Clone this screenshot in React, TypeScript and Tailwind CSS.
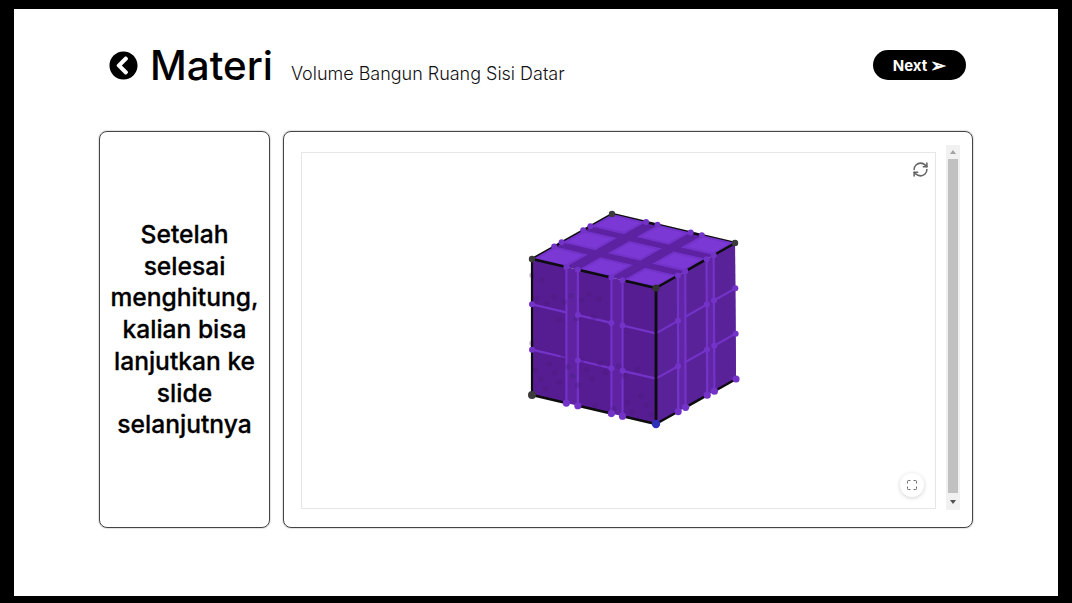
import { FaChevronCircleLeft } from "react-icons/fa";
import { Maximize, RefreshCw } from "lucide-react";

type P = [number, number];
const A: P = [32, 64], B: P = [156, 93], C: P = [156, 229], D: P = [32, 200], E: P = [235, 48], F: P = [236, 184], G: P = [112, 19];
const fr = [0, 0.277, 0.37, 0.64, 0.73, 1];
const lerp = (a: P, b: P, t: number): P => [a[0] + (b[0] - a[0]) * t, a[1] + (b[1] - a[1]) * t];
const bil = (a: P, b: P, c: P, d: P, u: number, v: number): P => lerp(lerp(a, b, u), lerp(d, c, u), v);
const L = (u: number, v: number) => bil(A, B, C, D, u, v);
const R = (u: number, v: number) => bil(B, E, F, C, u, v);
const T = (u: number, v: number) => bil(A, B, E, G, u, v);
const pts = (p: P[]) => p.map((q) => q.join(",")).join(" ");
const seg = (a: P, b: P) => ({ x1: a[0], y1: a[1], x2: b[0], y2: b[1] });
const V = "#7332c8";
const spans: [number, number][] = [[0, 1], [2, 3], [4, 5]];

function Face({ f, fill, gap }: { f: (u: number, v: number) => P; fill: string; gap: string }) {
  return (
    <g>
      <polygon points={pts([f(0, 0), f(1, 0), f(1, 1), f(0, 1)])} fill={gap} />
      {spans.map(([a, b]) => (
        <polygon key={a} points={pts([f(fr[a], 0), f(fr[b], 0), f(fr[b], 1), f(fr[a], 1)])} fill={fill} />
      ))}
      {[1, 2, 3, 4].map((i) => (
        <line key={i} {...seg(f(fr[i], 0.02), f(fr[i], 1))} stroke={V} strokeWidth={2.2} />
      ))}
      {[1 / 3, 2 / 3].flatMap((v) =>
        spans.map(([a, b]) => (
          <line key={`${v}-${a}`} {...seg(f(fr[a], v), f(fr[b], v))} stroke={V} strokeWidth={2.2} />
        ))
      )}
    </g>
  );
}

function Cube() {
  const shadowDots: P[] = [];
  for (let i = 0; i < 26; i++) {
    shadowDots.push(L(((i * 37) % 100) / 100, 0.62 + (((i * 23) % 38) / 100)));
    if (i % 2 === 0) shadowDots.push(L(((i * 53) % 60) / 100, 0.12 + (((i * 17) % 30) / 100)));
  }
  const edge = "#0a0a0a";
  return (
    <svg width="260" height="240" viewBox="0 0 260 240" className="block">
      <defs>
        <filter id="soft" x="-5%" y="-5%" width="110%" height="110%">
          <feGaussianBlur stdDeviation="0.5" />
        </filter>
      </defs>
      <g filter="url(#soft)">
        <polygon points={pts([A, B, E, G])} fill="#5c22a2" />
        <line {...seg(A, G)} stroke={edge} strokeWidth={2.4} />
        <line {...seg(G, E)} stroke={edge} strokeWidth={2.4} />
        <Face f={L} fill="#571e92" gap="#5e24a0" />
        <Face f={R} fill="#5a2299" gap="#6128a6" />
        {shadowDots.map((p, i) => (
          <circle key={i} cx={p[0]} cy={p[1]} r={2.8} fill="#3f1270" opacity={0.25} />
        ))}
        {spans.flatMap(([a, b]) =>
          spans.map(([c, d]) => (
            <polygon
              key={`${a}-${c}`}
              points={pts([T(fr[a] + 0.015, fr[c] + 0.015), T(fr[b] - 0.015, fr[c] + 0.015), T(fr[b] - 0.015, fr[d] - 0.015), T(fr[a] + 0.015, fr[d] - 0.015)])}
              fill="#7b37d4"
              stroke={V}
              strokeWidth={2}
            />
          ))
        )}
        {spans.map(([a, b]) => (
          <line key={a} {...seg(lerp(A, B, fr[a] + 0.01), lerp(A, B, fr[b] - 0.01))} stroke={edge} strokeWidth={2.4} />
        ))}
        {spans.map(([a, b]) => (
          <line key={a} {...seg(lerp(B, E, fr[a] + 0.01), lerp(B, E, fr[b] - 0.01))} stroke={edge} strokeWidth={2.4} />
        ))}
        {spans.map(([a, b]) => (
          <line key={a} {...seg(lerp(C, F, fr[a] + 0.01), lerp(C, F, fr[b] - 0.01))} stroke={edge} strokeWidth={2.4} />
        ))}
        {spans.map(([a, b]) => (
          <line key={a} {...seg(lerp(D, C, fr[a] + 0.01), lerp(D, C, fr[b] - 0.01))} stroke={edge} strokeWidth={2.4} />
        ))}
        <line {...seg(A, D)} stroke={edge} strokeWidth={2.2} />
        <line {...seg(B, C)} stroke={edge} strokeWidth={2.8} />
        {[1, 2, 3, 4].flatMap((i) => [lerp(D, C, fr[i]), lerp(C, F, fr[i]), lerp(A, G, fr[i]), lerp(G, E, fr[i]), lerp(A, B, fr[i]), lerp(B, E, fr[i])]).map((p, i) => (
          <circle key={i} cx={p[0]} cy={p[1]} r={i % 6 < 2 ? 3.6 : 3} fill={V} />
        ))}
        {[1 / 3, 2 / 3].flatMap((v) => [
          ...[0, 2, 3, 4].map((i) => L(fr[i], v)),
          ...[1, 3, 4, 5].map((i) => R(fr[i], v)),
        ]).map((p, i) => (
          <circle key={i} cx={p[0]} cy={p[1]} r={3} fill={V} />
        ))}
        <circle cx={F[0]} cy={F[1]} r={3.6} fill={V} />
        <circle cx={G[0]} cy={G[1]} r={3.2} fill="#3a3a3a" />
        <circle cx={E[0]} cy={E[1]} r={3.2} fill="#3a3a3a" />
        <circle cx={A[0]} cy={A[1]} r={3.2} fill="#3a3a3a" />
        <circle cx={B[0]} cy={B[1]} r={3.6} fill="#333333" />
        <circle cx={D[0]} cy={D[1]} r={4} fill="#3a3a3a" />
        <circle cx={C[0]} cy={C[1]} r={4.2} fill="#2f2fb8" />
      </g>
    </svg>
  );
}

export default function App() {
  return (
    <div className="box-border h-[603px] w-[1072px] border-x-[14px] border-t-[9px] border-b-[7px] border-black bg-white px-[85px] pt-[41px] font-['Inter',sans-serif] text-black">
      <header className="flex h-[30px] items-center justify-between pl-[10px] pr-[7px]">
        <div className="flex items-center">
          <FaChevronCircleLeft className="h-[29px] w-[29px]" />
          <h1 className="ml-[12px] mt-[2px] text-[40.3px] leading-[30px] font-medium">Materi</h1>
          <p className="ml-[18px] mt-[17px] text-[18px] leading-[30px] font-light tracking-[-0.02px] text-[#111]">Volume Bangun Ruang Sisi Datar</p>
        </div>
        <button className="flex h-[30px] w-[93px] items-center justify-center gap-[3px] rounded-full bg-black pt-[1px] text-[15px] leading-[29px] font-bold text-white">
          Next <span className="font-['DejaVu_Sans',sans-serif] text-[19px] leading-[29px] [-webkit-text-stroke:0.6px_white]">➢</span>
        </button>
      </header>
      <main className="mt-[51px] flex h-[397px] gap-[13px]">
        <section className="flex w-[171px] shrink-0 items-center justify-center rounded-lg border border-[#444] px-[5px] pt-[1px] text-center text-[24.6px] leading-[31.8px] font-medium [-webkit-text-stroke:0.3px_black] shadow-[0_0_1.5px_rgba(0,0,0,0.55)]">
          Setelah selesai menghitung, kalian bisa lanjutkan ke slide selanjutnya
        </section>
        <section className="relative flex-1 rounded-lg border border-[#444] shadow-[0_0_1.5px_rgba(0,0,0,0.55)]">
          <div className="relative ml-[17px] mt-[20px] h-[357px] w-[635px] border border-[#e6e6e6] bg-white">
            <div className="ml-[198px] pt-[42px]">
              <Cube />
            </div>
            <RefreshCw className="absolute right-[6px] top-[8px] h-[17px] w-[17px] text-[#666]" strokeWidth={2.2} />
            <div className="absolute bottom-[11px] right-[11px] flex h-[24px] w-[24px] items-center justify-center rounded-full bg-white shadow-[0_1px_4px_rgba(0,0,0,0.18)]">
              <Maximize className="h-[12px] w-[12px] text-[#666]" strokeWidth={2} />
            </div>
          </div>
          <div className="absolute left-[662px] top-[13px] flex h-[365px] w-[14px] flex-col items-center justify-between bg-[#f1f1f1]">
            <div className="flex h-[14px] w-full items-center justify-center">
              <div className="h-0 w-0 border-x-[3.5px] border-b-[4px] border-x-transparent border-b-[#a3a3a3]" />
            </div>
            <div className="w-[10px] flex-1 bg-[#c1c1c1]" />
            <div className="flex h-[17px] w-full items-center justify-center">
              <div className="h-0 w-0 border-x-[3.5px] border-t-[4px] border-x-transparent border-t-[#505050]" />
            </div>
          </div>
        </section>
      </main>
    </div>
  );
}
